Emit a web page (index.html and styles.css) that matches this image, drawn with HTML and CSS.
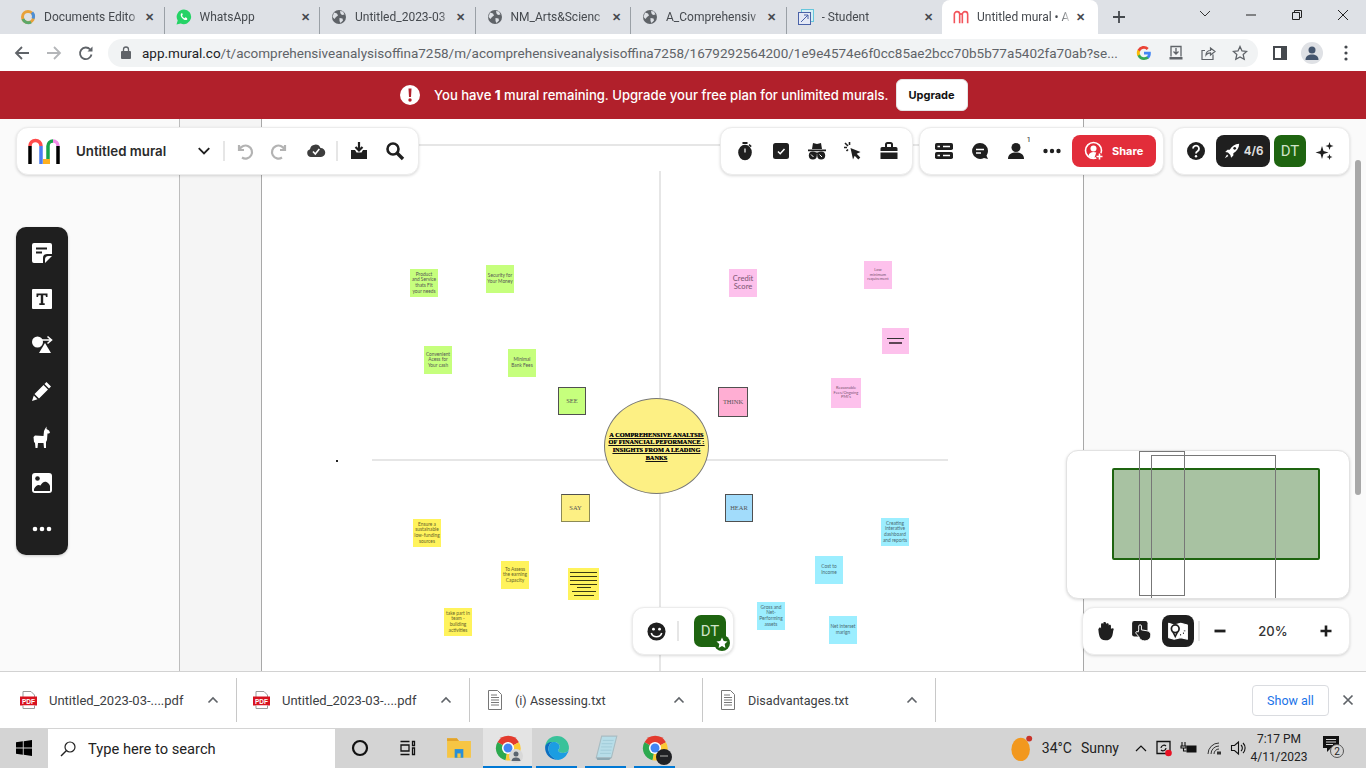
FILE: index.html
```html
<!DOCTYPE html>
<html lang="en">
<head>
  <meta charset="UTF-8" />
  <title>Untitled mural</title>
  <link rel="stylesheet" href="styles.css">
</head>
<body>

  <svg class="defs" width="0" height="0">
    <symbol id="globe" viewBox="0 0 16 16">
      <circle cx="8" cy="8" r="7" fill="#5f6368"/>
      <path d="M3 3.5l3 1 1 2-2 1.5-1.500 2L1.500 8zM9 2l3 .5 1.500 3-2.500.5-1.500-1.500zM8.500 9l3 .5.5 2-2.500 2.500-1-2z" fill="#dee1e6"/>
    </symbol>
    <symbol id="chrome" viewBox="0 0 32 32">
      <path d="M16 16L3 9A15 15 0 0 1 29.5 9z" fill="#e33b2e"/>
      <path d="M16 16L3 9A15 15 0 0 0 13 31z" fill="#2da94f"/>
      <path d="M16 16l13.5-7A15 15 0 0 1 13 31z" fill="#fcc934"/>
      <circle cx="16" cy="16" r="7.5" fill="#fff"/>
      <circle cx="16" cy="16" r="5.5" fill="#4285f4"/>
    </symbol>
    <symbol id="txt" viewBox="0 0 14 20">
      <path d="M.5 .5h9l4 4v15H.5z" fill="#fff" stroke="#777"/>
      <path d="M3 5h6M3 7.5h8M3 10h8M3 12.5h8M3 15h8" stroke="#777"/>
    </symbol>
    <symbol id="updown" viewBox="0 0 12 8">
      <path d="M1.500 6.500L6 2l4.500 4.500" fill="none" stroke="#5f6368" stroke-width="1.600"/>
    </symbol>
  </svg>

  <!-- browser tabs -->
  <div class="tabstrip">
    <div class="tab">
      <svg class="favicon" viewBox="0 0 16 16"><circle cx="8" cy="8" r="5.500" fill="none" stroke="#e8a13a" stroke-width="3"/><path d="M3 10a5.500 5.500 0 0 0 8 3" fill="none" stroke="#5aa86a" stroke-width="3"/><path d="M12 3.500a5.500 5.500 0 0 1 1 6" fill="none" stroke="#4d8fd6" stroke-width="3"/></svg>
      <span class="tab-title">Documents Edito</span><span class="tab-x">✕</span>
    </div>
    <div class="tab">
      <svg class="favicon" viewBox="0 0 16 16"><path d="M8 .5a7.300 7.300 0 0 0-6.300 11L.5 15.500l4.200-1.100A7.300 7.300 0 1 0 8 .5z" fill="#25d366"/><path d="M5.500 4.200c-1.500 1.200-.8 3.300.8 5 1.700 1.800 3.800 2.600 5 1.200l-.3-1.300-1.700-.8-.8.900c-1-.4-2-1.400-2.500-2.500l.8-.9-.7-1.700z" fill="#fff"/></svg>
      <span class="tab-title">WhatsApp</span><span class="tab-x">✕</span>
    </div>
    <div class="tab">
      <svg class="favicon"><use href="#globe"/></svg>
      <span class="tab-title">Untitled_2023-03</span><span class="tab-x">✕</span>
    </div>
    <div class="tab">
      <svg class="favicon"><use href="#globe"/></svg>
      <span class="tab-title">NM_Arts&amp;Scienc</span><span class="tab-x">✕</span>
    </div>
    <div class="tab">
      <svg class="favicon"><use href="#globe"/></svg>
      <span class="tab-title">A_Comprehensiv</span><span class="tab-x">✕</span>
    </div>
    <div class="tab tab-last">
      <svg class="favicon" viewBox="0 0 16 16"><rect x="3.500" y=".5" width="12" height="12" fill="#d5eef5" stroke="#66c6dc"/><rect x=".5" y="3.500" width="12" height="12" fill="#e4e9f6" stroke="#4a62a8"/><path d="M3 13l7-7M6 6h4v4" fill="none" stroke="#4a62a8"/></svg>
      <span class="tab-title">- Student</span><span class="tab-x">✕</span>
    </div>
    <div class="tab tab-active">
      <svg class="favicon" viewBox="0 0 18 16"><path d="M1.500 15V5a3 3 0 0 1 6 0v10M10.500 15V5a3 3 0 0 1 6 0v10M7.500 6a1.500 1.500 0 0 1 3 0" fill="none" stroke="#f2545b" stroke-width="1.800"/></svg>
      <span class="tab-title">Untitled mural • A</span><span class="tab-x">✕</span>
    </div>
    <svg class="new-tab" viewBox="0 0 14 14"><path d="M7 1v12M1 7h12" stroke="#45494e" stroke-width="1.800"/></svg>
    <div class="winctrl">
      <svg class="win-btn" viewBox="0 0 46 30"><path d="M18 11l5 5 5-5" fill="none" stroke="#333"/></svg>
      <svg class="win-btn" viewBox="0 0 46 30"><path d="M18 15h10" stroke="#222"/></svg>
      <svg class="win-btn" viewBox="0 0 46 30"><path d="M18.500 12.500h7v7h-7zM20.500 12.500v-2h7v7h-2" fill="none" stroke="#222"/></svg>
      <svg class="win-btn" viewBox="0 0 46 30"><path d="M18 10l10 10M28 10L18 20" stroke="#222"/></svg>
    </div>
  </div>

  <!-- address bar -->
  <div class="addressbar">
    <svg class="nav-icon" viewBox="0 0 16 16"><path d="M15 8H2M8 2L2 8l6 6" fill="none" stroke="#5f6368" stroke-width="1.800"/></svg>
    <svg class="nav-icon" viewBox="0 0 16 16"><path d="M1 8h13M8 2l6 6-6 6" fill="none" stroke="#b4b6b9" stroke-width="1.800"/></svg>
    <svg class="nav-icon" viewBox="0 0 16 16"><path d="M13.500 9.500a5.800 5.800 0 1 1-1.300-5" fill="none" stroke="#5f6368" stroke-width="1.800"/><path d="M14.500 1.500v5h-5z" fill="#5f6368"/></svg>
    <div class="omnibox">
      <svg class="lock" viewBox="0 0 10 13"><path d="M2.500 5.500V3.500a2.500 2.500 0 0 1 5 0v2" fill="none" stroke="#5f6368" stroke-width="1.300"/><rect y="5" width="10" height="8" rx="1" fill="#5f6368"/></svg>
      <span class="url"><span class="url-host">app.mural.co</span>/t/acomprehensiveanalysisoffina7258/m/acomprehensiveanalysisoffina7258/1679292564200/1e9e4574e6f0cc85ae2bcc70b5b77a5402fa70ab?se...</span>
      <div class="omni-icons">
        <svg class="omni-icon" viewBox="0 0 16 16"><path d="M14.800 8.200c0-.5 0-1-.1-1.400H8v2.700h3.900a3.300 3.300 0 0 1-1.400 2.200v1.800h2.300c1.300-1.200 2-3 2-5.300z" fill="#4285f4"/><path d="M8 15c1.900 0 3.500-.6 4.800-1.700l-2.300-1.800c-.6.400-1.500.7-2.500.7-1.900 0-3.500-1.300-4-3H1.600v1.900A7 7 0 0 0 8 15z" fill="#34a853"/><path d="M4 9.200a4.200 4.200 0 0 1 0-2.600V4.700H1.600a7 7 0 0 0 0 6.400z" fill="#fbbc05"/><path d="M8 3.800c1 0 2 .4 2.700 1.100l2-2A7 7 0 0 0 1.600 4.700L4 6.600c.5-1.600 2.100-2.800 4-2.800z" fill="#ea4335"/></svg>
        <svg class="omni-icon" viewBox="0 0 16 16"><path d="M3 11.500v-10h10v10M8 3v6M5.500 6.500L8 9l2.500-2.500" fill="none" stroke="#5f6368" stroke-width="1.300"/><path d="M1.500 12h13v2.500h-13z" fill="#5f6368"/></svg>
        <svg class="omni-icon" viewBox="0 0 16 16"><path d="M13 9.500v5H2v-9h3M6 10c0-3 2-4.500 4.500-4.500V3L15 6.500 10.500 10V7.800C8.500 7.800 7 8.500 6 10z" fill="none" stroke="#5f6368" stroke-width="1.200"/></svg>
        <svg class="omni-icon" viewBox="0 0 16 16"><path d="M8 1.500l2 4.400 4.700.5-3.500 3.200 1 4.700L8 11.900l-4.200 2.400 1-4.700L1.300 6.400 6 5.900z" fill="none" stroke="#5f6368" stroke-width="1.300"/></svg>
      </div>
    </div>
    <div class="chrome-right">
      <svg class="side-icon" viewBox="0 0 14 14"><rect x="1" y="1" width="12" height="12" fill="#fff" stroke="#45494e" stroke-width="2"/><rect x="8" y="1" width="5" height="12" fill="#45494e"/></svg>
      <div class="avatar"><svg viewBox="0 0 16 16" width="16" height="16"><circle cx="8" cy="5" r="3.500" fill="#45566e"/><path d="M1.500 15c0-4 3-5.500 6.500-5.500s6.500 1.500 6.500 5.500z" fill="#45566e"/></svg></div>
      <svg class="menu-dots" viewBox="0 0 4 16"><circle cx="2" cy="2" r="1.600" fill="#45494e"/><circle cx="2" cy="8" r="1.600" fill="#45494e"/><circle cx="2" cy="14" r="1.600" fill="#45494e"/></svg>
    </div>
  </div>

  <!-- upgrade banner -->
  <div class="banner">
    <svg class="alert" viewBox="0 0 20 20"><circle cx="10" cy="10" r="10" fill="#fff"/><path d="M8.500 3.500h3l-.5 8.500H9z" fill="#b1202b"/><circle cx="10" cy="15" r="1.700" fill="#b1202b"/></svg>
    <span class="banner-text">You have <b>1</b> mural remaining. Upgrade your free plan for unlimited murals.</span>
    <button class="upgrade">Upgrade</button>
  </div>

  <!-- mural canvas -->
  <div class="canvas">
    <div class="margin-area"></div>
    <div class="board"></div>
    <div class="board-top"></div>
    <div class="axis-v"></div>
    <div class="axis-h"></div>
    <div class="dot"></div>

    <div class="sticky green s-product">Product<br>and Service<br>thats Fit<br>your needs</div>
    <div class="sticky green s-security">Security for<br>Your Money</div>
    <div class="sticky green s-convenient">Convenient<br>Acess for<br>Your cash</div>
    <div class="sticky green s-minimal">Minimal<br>Bank Fees</div>
    <div class="sticky label green s-see">SEE</div>

    <div class="sticky pink s-credit">Credit<br>Score</div>
    <div class="sticky pink tiny s-low">Low<br>minimum<br>requirement</div>
    <div class="sticky pink s-plines"><i class="ln ln-w"></i><i class="ln ln-s"></i></div>
    <div class="sticky pink tiny s-reasonable">Reasonable<br>Fees/Ongoing<br>PMI's</div>
    <div class="sticky label s-think">THINK</div>

    <div class="sticky yellow s-ensure">Ensure a<br>sustainable<br>low-funding<br>sources</div>
    <div class="sticky label s-say">SAY</div>
    <div class="sticky yellow s-assess">To Assess<br>the earning<br>Capacity</div>
    <div class="sticky yellow s-ylines">
      <i class="ln"></i><i class="ln"></i><i class="ln"></i><i class="ln"></i><i class="ln ln-short"></i><i class="ln ln-mid"></i><i class="ln ln-mid2"></i>
    </div>
    <div class="sticky yellow s-take">take part in<br>team -<br>building<br>activities</div>

    <div class="sticky label s-hear">HEAR</div>
    <div class="sticky cyan s-creating">Creating<br>interative<br>dashboard<br>and reports</div>
    <div class="sticky cyan s-cost">Cost to<br>Income</div>
    <div class="sticky cyan s-gross">Gross and<br>Net-<br>Performing<br>assets</div>
    <div class="sticky cyan s-net">Net interset<br>marign</div>

    <div class="center-circle"><span>A COMPREHENSIVE ANALTSIS<br>OF FINANCIAL PEFORMANCE :<br>INSIGHTS FROM A LEADING<br>BANKS</span></div>

    <!-- top toolbars -->
    <div class="panel tb-mural">
      <svg class="logo" viewBox="0 0 32 26">
        <path d="M2 26V8" stroke="#000" stroke-width="3.500"/>
        <path d="M2 8a5.500 5.500 0 0 1 11 0" fill="none" stroke="#ff4b4b" stroke-width="3.500"/>
        <path d="M13 8v18" stroke="#4a7df0" stroke-width="3.500"/>
        <path d="M15 21h7v5h-7z" fill="#fdb022"/>
        <path d="M20 21V8" stroke="#17a34a" stroke-width="3.500"/>
        <path d="M20 8a5 5 0 0 1 5-5" fill="none" stroke="#17a34a" stroke-width="3.500"/>
        <path d="M25 3a5 5 0 0 1 5 5" fill="none" stroke="#f28be8" stroke-width="3.500"/>
        <path d="M30 8v18" stroke="#000" stroke-width="3.500"/>
      </svg>
      <span class="mural-title">Untitled mural</span>
      <span class="slot chevron"><svg class="ic-sm" viewBox="0 0 12 8"><path d="M1.500 1.500L6 6l4.500-4.500" fill="none" stroke="#1f1f1f" stroke-width="1.600"/></svg></span>
      <i class="vsep"></i>
      <span class="slot"><svg class="ic" viewBox="0 0 20 20"><path d="M5 4v5h5M5.500 8.500A6.500 6.500 0 1 1 8 16.500" fill="none" stroke="#b3b3b3" stroke-width="2.200"/></svg></span>
      <span class="slot"><svg class="ic" viewBox="0 0 20 20"><path d="M15 4v5h-5M14.500 8.500A6.500 6.500 0 1 0 12 16.500" fill="none" stroke="#b3b3b3" stroke-width="2.200"/></svg></span>
      <span class="slot"><svg class="ic" viewBox="0 0 20 20"><path d="M5 16a4 4 0 0 1-1-7.800A5.500 5.500 0 0 1 14.500 7 4.500 4.500 0 0 1 15 16z" fill="#3d3d3d"/><path d="M7 10.500l2.300 2.500 4-5" fill="none" stroke="#fff" stroke-width="1.600"/></svg></span>
      <i class="vsep vsep-b"></i>
      <span class="slot"><svg class="ic" viewBox="0 0 20 20"><path d="M10 1v8M6.500 6L10 9.500 13.500 6" fill="none" stroke="#1f1f1f" stroke-width="2.200"/><path d="M2 9h4l1.500 2.500h5L14 9h4v9H2z" fill="#1f1f1f"/></svg></span>
      <span class="slot"><svg class="ic" viewBox="0 0 20 20"><circle cx="8" cy="8" r="5.500" fill="none" stroke="#1f1f1f" stroke-width="2.600"/><path d="M12 12l6 6" stroke="#1f1f1f" stroke-width="3.400"/></svg></span>
    </div>

    <div class="panel tb-tools">
      <span class="slot"><svg class="ic" viewBox="0 0 20 20"><ellipse cx="10" cy="11.500" rx="6.800" ry="7.800" fill="#1f1f1f"/><path d="M7.500 1h5v2h-5zM14.500 3l2.200 2-1 1.200-2.200-2z" fill="#1f1f1f"/><path d="M10 7.500v4" stroke="#fff" stroke-width="1.200"/></svg></span>
      <span class="slot"><svg class="ic" viewBox="0 0 20 20"><rect x="2" y="2" width="16" height="16" rx="2.500" fill="#1f1f1f"/><path d="M7 10.500l2.200 2.200L13.500 8" fill="none" stroke="#fff" stroke-width="1.500"/></svg></span>
      <span class="slot"><svg class="ic" viewBox="0 0 20 20"><path d="M5 8l1-6 4 1 4-1 1 6zM1 8.500h18v1.800H1z" fill="#1f1f1f"/><circle cx="5.800" cy="14.500" r="4" fill="#1f1f1f"/><circle cx="14.200" cy="14.500" r="4" fill="#1f1f1f"/><path d="M8 12.500h4" stroke="#1f1f1f" stroke-width="2"/><path d="M4 13.500l2.500 2.500M12.500 13.500l2.500 2.500" stroke="#fff"/></svg></span>
      <span class="slot"><svg class="ic" viewBox="0 0 20 20"><path d="M7.500 7l10 4-3.800 1.800 3.600 3.600-2 2-3.600-3.600L10 18.500z" fill="#1f1f1f"/><path d="M2 2l3 3M6.500 1v3M1 6.500h3M3.500 10l1.500-1.500" stroke="#1f1f1f" stroke-width="1.600"/></svg></span>
      <span class="slot"><svg class="ic" viewBox="0 0 20 20"><path d="M7 6V3.500a1.500 1.500 0 0 1 1.500-1.500h3A1.500 1.500 0 0 1 13 3.500V6" fill="none" stroke="#1f1f1f" stroke-width="2"/><path d="M3 6h14a1.500 1.500 0 0 1 1.500 1.500V10h-17V7.500A1.500 1.500 0 0 1 3 6zM1.500 11.500h17V18h-17z" fill="#1f1f1f"/></svg></span>
    </div>

    <div class="panel tb-collab">
      <span class="slot"><svg class="ic" viewBox="0 0 20 20"><rect x="1" y="2" width="18" height="7" rx="1.800" fill="#1f1f1f"/><rect x="1" y="11" width="18" height="7" rx="1.800" fill="#1f1f1f"/><path d="M3.500 5.500H6M3.500 14.500H6M9 5.500h7M9 14.500h7" stroke="#fff" stroke-width="1.400"/></svg></span>
      <span class="slot"><svg class="ic" viewBox="0 0 20 20"><path d="M10 2a8 8 0 0 1 8 8 8 8 0 0 1-1.500 4.700l1.500 3.300-4-1A8 8 0 1 1 10 2z" fill="#1f1f1f"/><path d="M6 8.500h8M6 12h5" stroke="#fff" stroke-width="1.600"/></svg></span>
      <span class="slot user-slot"><svg class="ic" viewBox="0 0 20 20"><circle cx="10" cy="6.500" r="4.500" fill="#1f1f1f"/><path d="M2 18c0-5 3.500-6.500 8-6.500s8 1.500 8 6.500z" fill="#1f1f1f"/></svg><em class="user-count">1</em></span>
      <span class="slot"><svg class="ic" viewBox="0 0 20 20"><circle cx="3.500" cy="10" r="2.200" fill="#1f1f1f"/><circle cx="10" cy="10" r="2.200" fill="#1f1f1f"/><circle cx="16.500" cy="10" r="2.200" fill="#1f1f1f"/></svg></span>
      <button class="share"><svg class="ic" viewBox="0 0 20 20"><circle cx="9.500" cy="9.500" r="8" fill="none" stroke="#fff" stroke-width="1.600"/><circle cx="9.500" cy="7.500" r="3" fill="#fff"/><path d="M4.500 15c.5-3 2.500-4 5-4 1 0 2 .2 2.800.6L10 18z" fill="#fff"/><path d="M15.500 12v7M12 15.500h7" stroke="#e22d3a" stroke-width="4"/><path d="M15.500 12.500v6M12.500 15.500h6" stroke="#fff" stroke-width="1.600"/></svg><span>Share</span></button>
    </div>

    <div class="panel tb-account">
      <span class="slot"><svg class="ic" viewBox="0 0 20 20"><circle cx="10" cy="10" r="9" fill="#1f1f1f"/><path d="M7 7.500a3 3 0 1 1 4.500 2.700c-1 .6-1.500 1-1.500 2.300" fill="none" stroke="#fff" stroke-width="1.800"/><circle cx="10" cy="15.300" r="1.200" fill="#fff"/></svg></span>
      <div class="summit"><svg class="ic" viewBox="0 0 20 20"><path d="M18 2c-5 .2-8 2.500-10.500 6.500L5 8.500 2.500 11l3 .8 2.700 2.700.8 3 2.500-2.500v-2.500C15.500 10 17.800 7 18 2z" fill="#fff"/><circle cx="13" cy="7" r="1.500" fill="#1f1f1f"/><path d="M4.500 14L2 18l4-2.500z" fill="#fff"/></svg><span>4/6</span></div>
      <div class="initials">DT</div>
      <span class="slot"><svg class="ic" viewBox="0 0 20 20"><path d="M8 5l1.500 5 5 1.500-5 1.500L8 18l-1.500-5-5-1.500 5-1.500zM15.500 1l1 3 3 1-3 1-1 3-1-3-3-1 3-1zM15.500 13l.8 2.200 2.200.8-2.200.8-.8 2.200-.8-2.200-2.200-.8 2.200-.8z" fill="#1f1f1f"/></svg></span>
    </div>

    <!-- left tools -->
    <div class="toolbox">
      <svg class="tool" viewBox="0 0 22 22"><path d="M3 1h16a2 2 0 0 1 2 2v9h-5a4 4 0 0 0-4 4v5H3a2 2 0 0 1-2-2V3a2 2 0 0 1 2-2z" fill="#fff"/><path d="M5 6.500h11M5 10.500h6" stroke="#1f1f1f" stroke-width="2"/><path d="M21 14l-7 7v-3.500a3.500 3.500 0 0 1 3.500-3.500z" fill="#fff"/></svg>
      <svg class="tool" viewBox="0 0 22 22"><rect x="1" y="1" width="20" height="20" rx="1" fill="#fff"/><path d="M5.500 5.500h11V9H15l-.5-1.800h-2.300v8h1.500V17H8.300v-1.800h1.500v-8H7.500L7 9H5.500z" fill="#1f1f1f"/></svg>
      <svg class="tool" viewBox="0 0 22 22"><circle cx="6.500" cy="8" r="5.500" fill="#fff"/><path d="M14 9l6 10H8z" fill="#fff"/><path d="M11 6h9M16.500 2.500L20.500 6l-4 3.500" fill="none" stroke="#fff" stroke-width="1.600"/></svg>
      <svg class="tool" viewBox="0 0 22 22"><path d="M15.500 2L20 6.500l-2 2L13.500 4zM12.500 5L17 9.500l-9 9L3.500 14zM2.800 15.500l3.700 3.700L1 21z" fill="#fff"/></svg>
      <svg class="tool" viewBox="0 0 22 22"><path d="M15.500 .5L15.500 3 18 4.500 19 6.500 18 7.500 16.500 7.500 16 14 15 16 15 22 13 22 12.500 17 7 17 6.500 22 4.500 22 4 17 3 16 2.500 11 4 9.500 12.500 10 13 5 14 3z" fill="#fff"/></svg>
      <svg class="tool" viewBox="0 0 22 22"><rect x="1" y="1" width="20" height="20" rx="3" fill="#fff"/><circle cx="6.500" cy="6.500" r="2.300" fill="#1f1f1f"/><path d="M3 17c2-3.500 4-5 6.500-3.500 1.500-3 4-4.500 6-3.500 1.800.8 3 2.500 3.500 4v5H3z" fill="#1f1f1f"/></svg>
      <svg class="tool" viewBox="0 0 22 22"><circle cx="4" cy="11" r="2.300" fill="#fff"/><circle cx="11" cy="11" r="2.300" fill="#fff"/><circle cx="18" cy="11" r="2.300" fill="#fff"/></svg>
    </div>

    <!-- minimap -->
    <div class="panel minimap">
      <div class="mini-area"></div>
      <div class="mini-view mini-view-a"></div>
      <div class="mini-view mini-view-b"></div>
    </div>
    <div class="panel tb-zoom">
      <span class="slot"><svg class="ic ic-lg" viewBox="0 0 20 20"><path d="M3.500 8c0-1.500 2-1.500 2 0V4c0-1.500 2-1.500 2 0V3c0-1.500 2.500-1.500 2.500 0v1c0-1.500 2.500-1.500 2.500 0v1.500c0-1.500 2-1.500 2 0V8l1.500-.5c1.500 0 1 1.500.5 2.500-.5 4-1 8.500-7 8.500-6 0-6-6-6.500-10.500z" fill="#1f1f1f"/></svg></span>
      <span class="slot"><svg class="ic ic-lg" viewBox="0 0 20 20"><rect x="1" y="1" width="14" height="14" rx="2" fill="#1f1f1f"/><path d="M7 9V5.500c0-1.500 2.500-1.500 2.500 0V9l5 .8c2 .4 3.500 1.500 3.500 3.700 0 3.500-2.500 5.500-5.500 5.500S8 17.500 7 15l-2.500-3c-.5-1.500 1-2 2-1z" fill="#1f1f1f" stroke="#fff" stroke-width=".9"/></svg></span>
      <span class="map-btn"><svg class="ic ic-lg" viewBox="0 0 20 20"><path d="M1.500 3l5 1.500 6-1.500 6 1.500v13l-6-1.500-6 1.500-5-1.500z" fill="#fff" stroke="#fff" stroke-linejoin="round"/><circle cx="7.500" cy="8" r="3.500" fill="#fff" stroke="#1f1f1f" stroke-width="1.600"/><path d="M5.500 11l2 4 2-4M12 13.500h.8M14.500 12h.8M16 9.500v.8" stroke="#1f1f1f" stroke-width="1.400" fill="none"/></svg></span>
      <i class="vsep vsep-zoom"></i>
      <span class="slot"><svg class="ic-sm" viewBox="0 0 14 14"><path d="M1.500 7h11" stroke="#1f1f1f" stroke-width="2.800"/></svg></span>
      <span class="zoom-val">20%</span>
      <span class="slot"><svg class="ic-sm" viewBox="0 0 14 14"><path d="M1.500 7h11M7 1.500v11" stroke="#1f1f1f" stroke-width="2.600"/></svg></span>
    </div>

    <!-- reactions -->
    <div class="panel tb-react">
      <svg class="smile" viewBox="0 0 20 20"><circle cx="10" cy="10" r="9.500" fill="#1f1f1f"/><circle cx="6.800" cy="7.500" r="1.500" fill="#fff"/><circle cx="13.200" cy="7.500" r="1.500" fill="#fff"/><path d="M4.500 11.500c1 3 3 4 5.500 4s4.500-1 5.500-4" fill="none" stroke="#fff" stroke-width="1.700"/></svg>
      <i class="vsep"></i>
      <div class="initials self">DT
        <svg class="star" viewBox="0 0 16 16"><circle cx="8" cy="8" r="8" fill="#1e6410"/><path d="M8 2.500l1.700 3.500 3.800.5-2.800 2.600.7 3.800L8 11l-3.400 1.900.7-3.800-2.800-2.600 3.800-.5z" fill="#fff"/></svg>
      </div>
    </div>

    <div class="scroll-thumb"></div>
  </div>

  <!-- downloads shelf -->
  <div class="downloads">
    <div class="dl-item">
      <svg class="dl-icon" viewBox="0 0 17 18"><path d="M3 .5h8l3.500 3.500v3H3z" fill="#fff" stroke="#999"/><rect y="5.500" width="17" height="9" fill="#d8121f"/><text x="8.500" y="12.500" class="pdf-mark">PDF</text><path d="M3 14.500v3h11.500v-3" fill="#fff" stroke="#999"/></svg>
      <span class="dl-name">Untitled_2023-03-....pdf</span><svg class="dl-arrow"><use href="#updown"/></svg>
    </div>
    <div class="dl-item">
      <svg class="dl-icon" viewBox="0 0 17 18"><path d="M3 .5h8l3.500 3.500v3H3z" fill="#fff" stroke="#999"/><rect y="5.500" width="17" height="9" fill="#d8121f"/><text x="8.500" y="12.500" class="pdf-mark">PDF</text><path d="M3 14.500v3h11.500v-3" fill="#fff" stroke="#999"/></svg>
      <span class="dl-name">Untitled_2023-03-....pdf</span><svg class="dl-arrow"><use href="#updown"/></svg>
    </div>
    <div class="dl-item"><svg class="dl-icon"><use href="#txt"/></svg><span class="dl-name">(i) Assessing.txt</span><svg class="dl-arrow"><use href="#updown"/></svg></div>
    <div class="dl-item"><svg class="dl-icon"><use href="#txt"/></svg><span class="dl-name">Disadvantages.txt</span><svg class="dl-arrow"><use href="#updown"/></svg></div>
    <button class="show-all">Show all</button>
    <svg class="dl-close" viewBox="0 0 12 12"><path d="M1.500 1.500l9 9M10.500 1.500l-9 9" stroke="#5f6368" stroke-width="1.700"/></svg>
  </div>

  <!-- windows taskbar -->
  <div class="taskbar">
    <svg class="start" viewBox="0 0 16 16"><path d="M0 2.300L6.800 1.300v6.200H0zM7.700 1.200L16 0v7.500H7.700zM0 8.400h6.800v6.300L0 13.700zM7.700 8.400H16V16l-8.300-1.200z" fill="#000"/></svg>
    <div class="searchbox">
      <svg class="search-ic" viewBox="0 0 16 16"><circle cx="10" cy="6" r="5" fill="none" stroke="#222" stroke-width="1.200"/><path d="M6.500 9.500L1 15" stroke="#222" stroke-width="1.400"/></svg>
      <span>Type here to search</span>
    </div>
    <div class="task-slot task-cortana"><svg class="task-ic" viewBox="0 0 18 18"><circle cx="9" cy="9" r="7" fill="none" stroke="#111" stroke-width="2.200"/></svg></div>
    <div class="task-slot task-view"><svg class="task-ic" viewBox="0 0 18 18"><path d="M2.500 2.500h9M2.500 15.500h9M3 6h8v6H3zM14.500 2.500h2v4h-2zM14.500 9h2v6.500h-2z" fill="none" stroke="#111" stroke-width="1.300"/></svg></div>
    <div class="task-slot"><svg class="task-lg" viewBox="0 0 24 24"><path d="M1 3h9l2 2.500h11V21H1z" fill="#f6c544"/><path d="M1 3h9l2 2.500H1z" fill="#e2a32c"/><path d="M8 13h8v8H8z" fill="#2a8fd8"/><path d="M10.500 17h3v4h-3z" fill="#f6c544"/></svg></div>
    <div class="task-slot on active"><svg class="task-lg"><use href="#chrome"/></svg><svg class="task-badge" viewBox="0 0 14 14"><circle cx="7" cy="7" r="7" fill="#d8d8d8"/><circle cx="7" cy="5" r="2.500" fill="#5b6470"/><path d="M2.500 12c.5-3 2.500-3.500 4.500-3.500s4 .5 4.500 3.500z" fill="#5b6470"/></svg></div>
    <div class="task-slot on"><svg class="task-lg" viewBox="0 0 24 24"><path d="M12 1a11 11 0 0 1 11 11c0 3-2.500 4.500-5 4.500-3 0-5-1-5-2.500 0-1 1.500-1 1.500-3 0-3-3-5-6-4.500C5 7 3 9.500 1.200 10 2 5 6 1 12 1z" fill="#39c29a"/><path d="M1.200 10c1.500-2.500 4-4 7-3.500-3 1-4.500 4-4 7.500.6 4 4 7.500 8.800 8.800A11 11 0 0 1 1.200 10z" fill="#0c6fc0"/><path d="M8.300 6.500c3-.5 6.200 1.500 6.200 4.500 0 2-1.500 2-1.500 3 0 1.500 2 2.500 5 2.500 2.500 0 5-1.500 5-4.500a11 11 0 0 1-10 11c-4.800-1.300-8.200-4.800-8.800-8.800-.5-3.500 1-6.500 4.100-7.700z" fill="#1b9de2"/></svg></div>
    <div class="task-slot on"><svg class="task-lg" viewBox="0 0 24 24"><path d="M8 1h14l-5 20H3z" fill="#b7dde8" stroke="#a9bcc2"/><path d="M3 21l14 0-2 2H4z" fill="#8fa9b2"/><path d="M9 5h10M8 8h10M7.500 11h10M7 14h10M6.500 17h10" stroke="#9fcad6" stroke-width=".8"/></svg></div>
    <div class="task-slot on"><svg class="task-lg"><use href="#chrome"/></svg><svg class="task-badge dark" viewBox="0 0 16 16"><circle cx="8" cy="8" r="8" fill="#202124"/><path d="M4 7h8" stroke="#888" stroke-width="1.400"/></svg></div>

    <div class="tray">
      <svg class="sun" viewBox="0 0 24 30"><ellipse cx="10.500" cy="16" rx="10.300" ry="13" fill="#f2981e"/><circle cx="20" cy="4" r="3.300" fill="#c8322a"/></svg>
      <span class="temp">34°C</span>
      <span class="sky">Sunny</span>
      <svg class="tray-chev" viewBox="0 0 12 8"><path d="M1 7l5-5 5 5" fill="none" stroke="#111" stroke-width="1.200"/></svg>
      <span class="tray-ic"><svg viewBox="0 0 18 18" width="18" height="18"><path d="M2 2.500h13v12H2z" fill="none" stroke="#111" stroke-width="1.300"/><path d="M6 9a3 3 0 0 1 5-2M11 9a3 3 0 0 1-5 2" fill="none" stroke="#111" stroke-width="1.200"/><circle cx="13.500" cy="14" r="3.300" fill="#e81123"/></svg></span>
      <span class="tray-ic"><svg viewBox="0 0 18 18" width="18" height="18"><path d="M2 3v4M5 3v4M1 7h5v2H1zM3.500 9v3h3" fill="none" stroke="#111" stroke-width="1.100"/><rect x="6.500" y="6.500" width="10" height="7" fill="#111"/></svg></span>
      <span class="tray-ic"><svg viewBox="0 0 18 18" width="18" height="18"><path d="M3 15A11 11 0 0 1 14 4M6 15a8 8 0 0 1 8-8M9 15a5 5 0 0 1 5-5" fill="none" stroke="#333"/><path d="M12 12.500h4v3h-4z" fill="#333"/></svg></span>
      <span class="tray-ic"><svg viewBox="0 0 18 18" width="18" height="18"><path d="M1.500 6.500h3L8.500 3v12l-4-3.500h-3z" fill="none" stroke="#111" stroke-width="1.100"/><path d="M11 6a4 4 0 0 1 0 6M13 4a7 7 0 0 1 0 10" fill="none" stroke="#111" stroke-width="1.100"/></svg></span>
      <div class="clock"><span>7:17 PM</span><span>4/11/2023</span></div>
      <div class="notify">
        <svg viewBox="0 0 16 16" width="16" height="16"><path d="M0 0h16v12H8l-4 4v-4H0z" fill="#111"/><path d="M3 3.500h10M3 6h10M3 8.500h7" stroke="#d4d4d4"/></svg>
        <span class="notify-count">2</span>
      </div>
    </div>
  </div>

</body>
</html>
```

FILE: styles.css
```css
html, body {
  margin: 0;
  padding: 0;
}
body {
  width: 1366px;
  height: 768px;
  overflow: hidden;
  display: flex;
  flex-direction: column;
  font-family: "Roboto", "Liberation Sans", sans-serif;
  background-color: #fff;
}
.defs {
  position: absolute;
}
svg {
  display: block;
  flex: none;
}
.pdf-mark {
  font-family: "Liberation Sans", sans-serif;
  font-size: 6.5px;
  font-weight: bold;
  text-anchor: middle;
  fill: #fff;
}

/* tabs */
.tabstrip {
  height: 34px;
  display: flex;
  align-items: stretch;
  padding-left: 9px;
  background-color: #dee1e6;
  flex: none;
}
.tab {
  width: 155.5px;
  box-sizing: border-box;
  display: flex;
  align-items: center;
  margin-top: 7px;
  padding: 0 6px 7px 11px;
  border-right: 1px solid #9aa0a6;
  font-size: 12px;
  color: #45494e;
}
.favicon {
  width: 16px;
  height: 16px;
  margin-right: 8px;
}
.tab-title {
  flex: 1;
  white-space: nowrap;
  overflow: hidden;
  -webkit-mask-image: linear-gradient(to left, transparent 0, #000 12px);
  mask-image: linear-gradient(to left, transparent 0, #000 12px);
}
.tab-x {
  width: 16px;
  margin-left: 1px;
  font-size: 11px;
  font-weight: bold;
  text-align: center;
}
.tab-last {
  border-right: none;
}
.tab-active {
  margin-top: 0;
  padding: 0 9px 0 11px;
  background-color: #fff;
  border-right: none;
  border-radius: 8px 8px 0 0;
}
.new-tab {
  width: 14px;
  height: 14px;
  margin: 10px 0 0 14px;
}
.winctrl {
  margin-left: auto;
  display: flex;
}
.win-btn {
  width: 46px;
  height: 30px;
}

/* address bar */
.addressbar {
  height: 37px;
  display: flex;
  align-items: center;
  flex: none;
  background-color: #fff;
}
.nav-icon {
  width: 16px;
  height: 16px;
  margin-left: 14px;
  margin-right: 2px;
}
.omnibox {
  width: 1150px;
  height: 28px;
  margin-left: 12px;
  box-sizing: border-box;
  padding-left: 13px;
  display: flex;
  align-items: center;
  background-color: #f1f3f4;
  border-radius: 14px;
}
.lock {
  width: 10px;
  height: 13px;
  margin-right: 11px;
}
.url {
  font-size: 13.5px;
  color: #5f6368;
  white-space: nowrap;
}
.url-host {
  color: #202124;
}
.omni-icons {
  margin-left: auto;
  display: flex;
  padding-right: 10px;
}
.omni-icon {
  width: 16px;
  height: 16px;
  margin-left: 16px;
}
.chrome-right {
  display: flex;
  align-items: center;
  margin-left: 15px;
}
.side-icon {
  width: 14px;
  height: 14px;
}
.avatar {
  width: 22px;
  height: 22px;
  margin-left: 14px;
  display: flex;
  align-items: center;
  justify-content: center;
  border-radius: 50%;
  background-color: #dfe1e5;
}
.menu-dots {
  width: 4px;
  height: 16px;
  margin-left: 21px;
}

/* banner */
.banner {
  height: 48px;
  display: flex;
  align-items: center;
  padding-left: 400px;
  flex: none;
  background-color: #b1202b;
  color: #fff;
}
.alert {
  width: 20px;
  height: 20px;
  margin-right: 14px;
}
.banner-text {
  font-family: "Inter", sans-serif;
  font-size: 13.1px;
  font-weight: 500;
  white-space: nowrap;
}
.banner-text b {
  font-weight: 800;
}
.upgrade {
  width: 72px;
  height: 32px;
  margin-left: 7px;
  padding: 0;
  font-family: "Inter", sans-serif;
  font-size: 11px;
  font-weight: 700;
  color: #111;
  background-color: #fff;
  border: 1px solid #e4e4e4;
  border-radius: 6px;
}

/* canvas */
.canvas {
  position: relative;
  height: 552px;
  flex: none;
  overflow: hidden;
  background-color: #fafafa;
}
.margin-area {
  position: absolute;
  left: 179px;
  top: 0;
  bottom: 0;
  width: 81px;
  background-color: #f5f5f5;
  border-left: 1px solid #bdbdbd;
}
.board {
  position: absolute;
  left: 261px;
  top: 0;
  bottom: 0;
  width: 821px;
  background-color: #fff;
  border-left: 1px solid #a8a8a8;
  border-right: 1px solid #a8a8a8;
}
.board-top {
  position: absolute;
  left: 262px;
  top: 25px;
  width: 821px;
  height: 2px;
  background-color: #e6e6e6;
}
.axis-v {
  position: absolute;
  left: 659px;
  top: 52px;
  bottom: 0;
  width: 2px;
  background-color: #e6e6e6;
}
.axis-h {
  position: absolute;
  left: 372px;
  top: 340px;
  width: 576px;
  height: 2px;
  background-color: #e6e6e6;
}
.dot {
  position: absolute;
  left: 336px;
  top: 341px;
  width: 2px;
  height: 2px;
  background-color: #222;
}

/* stickies */
.sticky {
  position: absolute;
  width: 28px;
  height: 28px;
  box-sizing: border-box;
  display: flex;
  flex-direction: column;
  align-items: center;
  justify-content: center;
  font-family: "Lato", sans-serif;
  font-size: 4.8px;
  line-height: 5.6px;
  text-align: center;
  white-space: nowrap;
  color: #555;
}
.green { background-color: #c6ff7d; }
.pink { background-color: #fdc1ec; color: #7a5570; }
.yellow { background-color: #fff35c; color: #66622a; }
.cyan { background-color: #9ceeff; color: #4a6a72; }
.tiny {
  font-size: 4px;
  line-height: 4.9px;
}
.label {
  font-family: "Liberation Serif", serif;
  font-size: 6.5px;
  border: 1.5px solid #505050;
  color: #555;
}

.s-product { left: 410px; top: 150px; }
.s-security { left: 486px; top: 146px; }
.s-convenient { left: 424px; top: 227px; }
.s-minimal { left: 508px; top: 230px; }
.s-see { left: 558px; top: 268px; }

.s-credit {
  left: 729px;
  top: 150px;
  font-size: 7.6px;
  line-height: 7.6px;
}
.s-low { left: 864px; top: 142px; }
.s-plines { left: 882px; top: 209px; width: 27px; height: 26px; gap: 3px; }
.s-reasonable { left: 831px; top: 259px; width: 30px; height: 30px; }
.s-think { left: 718px; top: 268px; width: 30px; height: 30px; background-color: #ffaed3; }

.s-ensure { left: 413px; top: 400px; }
.s-say { left: 561px; top: 375px; width: 29px; background-color: #fdf084; border-color: #8c8a55; border-top-color: #505050; }
.s-assess { left: 501px; top: 442px; }
.s-ylines { left: 568px; top: 449px; width: 31px; height: 32px; gap: 2.7px; }
.s-take { left: 444px; top: 489px; }

.s-hear { left: 725px; top: 375px; background-color: #a2dcfb; }
.s-creating { left: 881px; top: 399px; }
.s-cost { left: 815px; top: 437px; }
.s-gross { left: 757px; top: 483px; }
.s-net { left: 829px; top: 497px; }

.ln {
  display: block;
  width: 27px;
  height: 1px;
  background-color: #3a3a14;
}
.ln-short { width: 14px; }
.ln-mid { width: 24px; }
.ln-mid2 { width: 20px; }
.ln-w { width: 17px; background-color: #333; }
.ln-s { width: 13px; height: 1.5px; background-color: #5e4556; }

.center-circle {
  position: absolute;
  left: 604px;
  top: 279px;
  width: 105px;
  height: 96px;
  box-sizing: border-box;
  display: flex;
  align-items: center;
  justify-content: center;
  background-color: #fdf084;
  border: 1px solid #777;
  border-radius: 50%;
  font-family: "Liberation Serif", serif;
  font-size: 6.3px;
  font-weight: bold;
  line-height: 7.7px;
  text-align: center;
  white-space: nowrap;
  color: #111;
  text-decoration: underline;
  text-shadow: 0 0 .5px #111;
}

/* floating panels */
.panel {
  position: absolute;
  box-sizing: border-box;
  display: flex;
  align-items: center;
  background-color: #fff;
  border: 1px solid #ececec;
  border-radius: 12px;
  box-shadow: 0 1px 3px rgba(0,0,0,0.15);
}
.slot {
  position: relative;
  width: 36px;
  height: 32px;
  display: flex;
  align-items: center;
  justify-content: center;
  flex: none;
}
.ic {
  width: 20px;
  height: 20px;
}
.ic-lg {
  width: 22px;
  height: 22px;
}
.ic-sm {
  width: 14px;
  height: 14px;
}
.vsep {
  display: block;
  width: 2px;
  height: 20px;
  margin-right: 1px;
  background-color: #e6e6e6;
  flex: none;
}
.vsep-b {
  margin: 0 3px 0 2px;
}
.tb-mural {
  left: 16px;
  top: 8px;
  width: 403px;
  height: 48px;
  padding-left: 11px;
}
.logo {
  width: 32px;
  height: 26px;
  margin-right: 16px;
}
.mural-title {
  width: 108px;
  font-family: "Inter", sans-serif;
  font-size: 13.3px;
  font-weight: 600;
  color: #2b2b2b;
  white-space: nowrap;
}
.chevron {
  width: 39px;
}
.tb-tools {
  left: 720px;
  top: 8px;
  width: 193px;
  height: 48px;
  padding-left: 6px;
}
.tb-collab {
  left: 919px;
  top: 8px;
  width: 245px;
  height: 48px;
  padding-left: 6px;
}
.user-count {
  position: absolute;
  right: 3px;
  top: 0;
  font-size: 8px;
  font-style: normal;
  color: #333;
}
.share {
  width: 84px;
  height: 32px;
  margin-left: 2px;
  padding: 0 0 0 12px;
  display: flex;
  align-items: center;
  gap: 8px;
  font-family: "Inter", sans-serif;
  font-size: 11px;
  font-weight: 700;
  color: #fff;
  background-color: #e22d3a;
  border: none;
  border-radius: 8px;
}
.tb-account {
  left: 1172px;
  top: 8px;
  width: 178px;
  height: 48px;
  padding-left: 5px;
}
.summit {
  width: 54px;
  height: 32px;
  margin-left: 2px;
  display: flex;
  align-items: center;
  justify-content: center;
  gap: 3px;
  font-family: "Inter", sans-serif;
  font-size: 11.5px;
  font-weight: 700;
  color: #ddd;
  background-color: #1f1f1f;
  border-radius: 8px;
}
.summit .ic {
  width: 18px;
  height: 18px;
}
.initials {
  position: relative;
  width: 32px;
  height: 32px;
  margin-left: 4px;
  display: flex;
  align-items: center;
  justify-content: center;
  font-size: 15px;
  color: #cfe3c8;
  background-color: #1e6410;
  border-radius: 7px;
  flex: none;
}
.self {
  margin-left: 14px;
}
.star {
  position: absolute;
  right: -4px;
  bottom: -4px;
  width: 16px;
  height: 16px;
}

/* left tools */
.toolbox {
  position: absolute;
  left: 16px;
  top: 108px;
  width: 52px;
  height: 328px;
  box-sizing: border-box;
  padding: 15px 0;
  display: flex;
  flex-direction: column;
  align-items: center;
  justify-content: space-between;
  background-color: #1f1f1f;
  border-radius: 10px;
  box-shadow: 0 1px 3px rgba(0,0,0,0.2);
}
.tool {
  width: 22px;
  height: 22px;
}

/* minimap */
.minimap {
  left: 1066px;
  top: 331px;
  width: 284px;
  height: 149px;
  overflow: hidden;
  border: 1px solid #e2e2e2;
}
.mini-area {
  position: absolute;
  left: 45px;
  top: 17px;
  width: 208px;
  height: 92px;
  box-sizing: border-box;
  background-color: #a8c2a2;
  border: 2px solid #1e6410;
  border-radius: 2px;
}
.mini-view {
  position: absolute;
  box-sizing: border-box;
  border: 1px solid #777;
}
.mini-view-a {
  left: 72px;
  top: 0;
  width: 46px;
  height: 145px;
}
.mini-view-b {
  left: 84px;
  top: 4px;
  width: 125px;
  height: 160px;
}
.tb-zoom {
  left: 1082px;
  top: 488px;
  width: 268px;
  height: 48px;
  padding-left: 5px;
}
.map-btn {
  width: 32px;
  height: 32px;
  margin-left: 2px;
  display: flex;
  align-items: center;
  justify-content: center;
  background-color: #1f1f1f;
  border-radius: 8px;
  flex: none;
}
.vsep-zoom {
  margin: 0 2px 0 4px;
}
.zoom-val {
  width: 70px;
  font-family: "Inter", sans-serif;
  font-size: 13px;
  font-weight: 500;
  text-align: center;
  color: #333;
}
.tb-react {
  left: 632px;
  top: 488px;
  width: 102px;
  height: 48px;
  padding-left: 14px;
}
.smile {
  width: 19px;
  height: 19px;
  margin-right: 11px;
}
.scroll-thumb {
  position: absolute;
  left: 1355px;
  top: 41px;
  width: 6px;
  height: 335px;
  background-color: #a8a8a8;
  border-radius: 3px;
}

/* downloads */
.downloads {
  height: 57px;
  box-sizing: border-box;
  padding-left: 4px;
  display: flex;
  align-items: center;
  flex: none;
  background-color: #fff;
  border-top: 1px solid #d2d2d2;
  color: #3c4043;
}
.dl-item {
  position: relative;
  width: 233px;
  height: 44px;
  box-sizing: border-box;
  padding-left: 16px;
  display: flex;
  align-items: center;
  border-right: 1px solid #c8c8c8;
  font-size: 13px;
}
.dl-icon {
  width: 17px;
  height: 18px;
  margin-right: 12px;
}
.dl-item:nth-child(n+3) {
  font-size: 12.6px;
}
.dl-item:nth-child(n+3) .dl-icon {
  width: 14px;
  height: 20px;
  margin: 0 13px 0 2px;
}
.dl-name {
  white-space: nowrap;
}
.dl-arrow {
  position: absolute;
  right: 17px;
  top: 18px;
  width: 12px;
  height: 8px;
}
.show-all {
  width: 77px;
  height: 31px;
  margin-left: auto;
  padding: 0;
  font-family: "Roboto", sans-serif;
  font-size: 12.5px;
  color: #1a73e8;
  background-color: #fff;
  border: 1px solid #dadce0;
  border-radius: 4px;
}
.dl-close {
  width: 12px;
  height: 12px;
  margin: 0 12px 0 13px;
}

/* taskbar */
.taskbar {
  height: 40px;
  display: flex;
  align-items: center;
  flex: none;
  background-color: #d4d4d4;
  color: #111;
}
.start {
  width: 16px;
  height: 16px;
  margin: 0 16px;
}
.searchbox {
  width: 287px;
  height: 39px;
  margin-top: 1px;
  box-sizing: border-box;
  padding-left: 12px;
  display: flex;
  align-items: center;
  gap: 12px;
  background-color: #fff;
  font-size: 14.7px;
  color: #222;
}
.search-ic {
  width: 16px;
  height: 16px;
}
.task-slot {
  position: relative;
  width: 49px;
  height: 40px;
  display: flex;
  align-items: center;
  justify-content: center;
  flex: none;
}
.searchbox + .task-slot {
  margin-left: 1px;
}
.task-cortana .task-ic {
  margin-right: 2px;
}
.task-view .task-ic {
  margin-right: 6px;
}
.task-ic {
  width: 18px;
  height: 18px;
}
.task-lg {
  width: 26px;
  height: 26px;
}
.on::after {
  content: "";
  position: absolute;
  left: 4px;
  right: 4px;
  bottom: 0;
  height: 2px;
  background-color: #0078d4;
}
.active {
  background-color: #e4e4e4;
}
.active::after {
  left: 0;
  right: 0;
}
.task-badge {
  position: absolute;
  left: 26px;
  top: 21px;
  width: 14px;
  height: 14px;
}
.task-badge.dark {
  width: 16px;
  height: 16px;
}
.tray {
  margin-left: auto;
  display: flex;
  align-items: center;
  font-size: 14px;
  color: #222;
}
.sun {
  width: 22px;
  height: 27px;
  margin-right: 9px;
}
.sky {
  margin-left: 9px;
}
.tray-chev {
  width: 12px;
  height: 8px;
  margin: 0 5px 0 16px;
}
.tray-ic {
  width: 24px;
  height: 18px;
  display: flex;
  justify-content: center;
  margin-right: 1px;
}
.clock {
  width: 54px;
  display: flex;
  flex-direction: column;
  align-items: center;
  font-size: 12px;
  line-height: 18px;
}
.notify {
  position: relative;
  width: 18px;
  height: 24px;
  margin: 0 25px 0 17px;
}
.notify-count {
  position: absolute;
  left: 7px;
  top: 8px;
  width: 14px;
  height: 14px;
  box-sizing: border-box;
  font-size: 10px;
  line-height: 13px;
  text-align: center;
  background-color: #d4d4d4;
  border: 1px solid #555;
  border-radius: 50%;
}
```
